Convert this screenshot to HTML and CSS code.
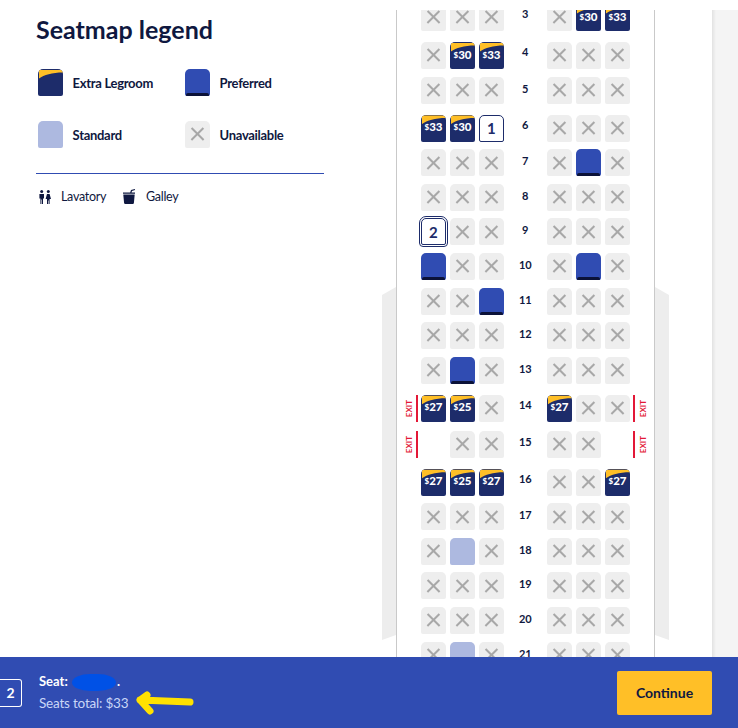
FILE: index.html
```html
<!DOCTYPE html>
<html lang="en">
<head>
  <meta charset="UTF-8" />
  <meta name="viewport" content="width=device-width, initial-scale=1.0" />
  <title>Seat selection</title>
  <link rel="stylesheet" href="styles.css">
</head>
<body>
  <div class="page">
    <aside class="legend">
      <h2>Seatmap legend</h2>
      <div class="legend-grid">
        <div class="legend-item"><span class="seat extra"></span>Extra Legroom</div>
        <div class="legend-item"><span class="seat pref"></span>Preferred</div>
        <div class="legend-item"><span class="seat std"></span>Standard</div>
        <div class="legend-item"><span class="seat x"></span>Unavailable</div>
      </div>
      <div class="amenities">
        <svg class="icon" width="12" height="14" viewBox="0 0 12 14"><circle cx="2.700" cy="1.600" r="1.500"/><path d="M.4 4h4.600v4.600H4V14H3V9.500H2.400V14h-1V8.600H.4z"/><circle cx="9.300" cy="1.600" r="1.500"/><path d="M8 4h2.600L12 9H10.600V14h-1V10.500H9V14H8V9H6.600z"/></svg>
        <span class="amenity-label">Lavatory</span>
        <svg class="icon galley" width="14" height="15" viewBox="0 0 14 15"><path d="M7.200 3.400 8 1l3.800-1 .3 1.100-3.100.8-.5 1.500h3.500v1.400H0V3.400z"/><path d="M.3 5.500h11.400L10.900 14q-.1 1-1.100 1H2.200q-1 0-1.100-1z"/></svg>
        <span class="amenity-label">Galley</span>
      </div>
    </aside>

    <main class="map">
      <div class="wing wing-l"></div>
      <div class="cabin">
        <div class="rows">
          <div class="row tall"><span class="exit"></span><div class="side"><span class="seat x"></span><span class="seat x"></span><span class="seat x"></span></div><span class="num">3</span><div class="side"><span class="seat x"></span><span class="seat extra"><b><small>$</small>30</b></span><span class="seat extra"><b><small>$</small>33</b></span></div></div>
          <div class="row tall"><span class="exit"></span><div class="side"><span class="seat x"></span><span class="seat extra"><b><small>$</small>30</b></span><span class="seat extra"><b><small>$</small>33</b></span></div><span class="num">4</span><div class="side"><span class="seat x"></span><span class="seat x"></span><span class="seat x"></span></div></div>
          <div class="row"><span class="exit"></span><div class="side"><span class="seat x"></span><span class="seat x"></span><span class="seat x"></span></div><span class="num">5</span><div class="side"><span class="seat x"></span><span class="seat x"></span><span class="seat x"></span></div></div>
          <div class="row tall"><span class="exit"></span><div class="side"><span class="seat extra"><b><small>$</small>33</b></span><span class="seat extra"><b><small>$</small>30</b></span><span class="seat picked">1</span></div><span class="num">6</span><div class="side"><span class="seat x"></span><span class="seat x"></span><span class="seat x"></span></div></div>
          <div class="row"><span class="exit"></span><div class="side"><span class="seat x"></span><span class="seat x"></span><span class="seat x"></span></div><span class="num">7</span><div class="side"><span class="seat x"></span><span class="seat pref"></span><span class="seat x"></span></div></div>
          <div class="row"><span class="exit"></span><div class="side"><span class="seat x"></span><span class="seat x"></span><span class="seat x"></span></div><span class="num">8</span><div class="side"><span class="seat x"></span><span class="seat x"></span><span class="seat x"></span></div></div>
          <div class="row"><span class="exit"></span><div class="side"><span class="seat picked active">2</span><span class="seat x"></span><span class="seat x"></span></div><span class="num">9</span><div class="side"><span class="seat x"></span><span class="seat x"></span><span class="seat x"></span></div></div>
          <div class="row"><span class="exit"></span><div class="side"><span class="seat pref"></span><span class="seat x"></span><span class="seat x"></span></div><span class="num">10</span><div class="side"><span class="seat x"></span><span class="seat pref"></span><span class="seat x"></span></div></div>
          <div class="row"><span class="exit"></span><div class="side"><span class="seat x"></span><span class="seat x"></span><span class="seat pref"></span></div><span class="num">11</span><div class="side"><span class="seat x"></span><span class="seat x"></span><span class="seat x"></span></div></div>
          <div class="row"><span class="exit"></span><div class="side"><span class="seat x"></span><span class="seat x"></span><span class="seat x"></span></div><span class="num">12</span><div class="side"><span class="seat x"></span><span class="seat x"></span><span class="seat x"></span></div></div>
          <div class="row"><span class="exit"></span><div class="side"><span class="seat x"></span><span class="seat pref"></span><span class="seat x"></span></div><span class="num">13</span><div class="side"><span class="seat x"></span><span class="seat x"></span><span class="seat x"></span></div></div>
          <div class="row tall"><span class="exit"><em>EXIT</em><i></i></span><div class="side"><span class="seat extra"><b><small>$</small>27</b></span><span class="seat extra"><b><small>$</small>25</b></span><span class="seat x"></span></div><span class="num">14</span><div class="side"><span class="seat extra"><b><small>$</small>27</b></span><span class="seat x"></span><span class="seat x"></span></div><span class="exit right"><i></i><em>EXIT</em></span></div>
          <div class="row mid"><span class="exit"><em>EXIT</em><i></i></span><div class="side"><span class="seat none"></span><span class="seat x"></span><span class="seat x"></span></div><span class="num">15</span><div class="side"><span class="seat x"></span><span class="seat x"></span><span class="seat none"></span></div><span class="exit right"><i></i><em>EXIT</em></span></div>
          <div class="row tall"><span class="exit"></span><div class="side"><span class="seat extra"><b><small>$</small>27</b></span><span class="seat extra"><b><small>$</small>25</b></span><span class="seat extra"><b><small>$</small>27</b></span></div><span class="num">16</span><div class="side"><span class="seat x"></span><span class="seat x"></span><span class="seat extra"><b><small>$</small>27</b></span></div></div>
          <div class="row"><span class="exit"></span><div class="side"><span class="seat x"></span><span class="seat x"></span><span class="seat x"></span></div><span class="num">17</span><div class="side"><span class="seat x"></span><span class="seat x"></span><span class="seat x"></span></div></div>
          <div class="row"><span class="exit"></span><div class="side"><span class="seat x"></span><span class="seat std"></span><span class="seat x"></span></div><span class="num">18</span><div class="side"><span class="seat x"></span><span class="seat x"></span><span class="seat x"></span></div></div>
          <div class="row"><span class="exit"></span><div class="side"><span class="seat x"></span><span class="seat x"></span><span class="seat x"></span></div><span class="num">19</span><div class="side"><span class="seat x"></span><span class="seat x"></span><span class="seat x"></span></div></div>
          <div class="row"><span class="exit"></span><div class="side"><span class="seat x"></span><span class="seat x"></span><span class="seat x"></span></div><span class="num">20</span><div class="side"><span class="seat x"></span><span class="seat x"></span><span class="seat x"></span></div></div>
          <div class="row"><span class="exit"></span><div class="side"><span class="seat x"></span><span class="seat std"></span><span class="seat x"></span></div><span class="num">21</span><div class="side"><span class="seat x"></span><span class="seat x"></span><span class="seat x"></span></div></div>
        </div>
      </div>
      <div class="wing wing-r"></div>
      <div class="rail"></div>
    </main>
  </div>

  <footer class="bar">
    <span class="bar-seat">2</span>
    <div class="bar-info">
      <div class="bar-name">Seat: <span class="scribble"></span>.</div>
      <div class="bar-total">Seats total: $33</div>
    </div>
    <a href="#" class="continue">Continue</a>
    <svg class="arrow" width="70" height="34" viewBox="0 0 70 34"><path d="M60 16 10 14M17 9 10 14 20 25" fill="none" stroke="#ffe100" stroke-width="7" stroke-linecap="round" stroke-linejoin="round"/></svg>
  </footer>
</body>
</html>
```

FILE: styles.css
```css
:root{--navy:#1d2c6a;--ink:#0f1840;--blue:#304cb2;--gold:#ffbf27;--red:#e31837;--off:#eeeeee}
*{box-sizing:border-box;font-family:Lato,"Noto Sans",Arial,sans-serif}
html,body{height:100%}
body{margin:0;overflow:hidden;background:#fff;color:var(--ink)}
.page{display:flex;height:100vh}

.legend{width:382px;flex:none;padding:13px 58px 0 36px}
h2{margin:0 0 24px;font-size:25px;line-height:32px;font-weight:700;color:var(--ink)}
.legend-grid{display:grid;grid-template-columns:147px 1fr;row-gap:25px;padding:0 0 25px 2px;border-bottom:1px solid var(--blue)}
.legend-item{display:flex;align-items:center;gap:10px;font-size:13px;font-weight:700;letter-spacing:-.3px}
.legend-item .seat{flex:none}
.amenities{display:flex;align-items:center;padding:15px 0 0 3px;font-size:12.500px;letter-spacing:-.3px}
.icon{fill:var(--ink);flex:none}
.amenity-label{margin-left:10px;margin-right:17px}
.galley{margin-right:-1px}

.map{flex:1;display:flex;margin-top:10px;overflow:hidden}
.cabin{width:259px;flex:none;height:100%;background:#fff;border-left:1.3px solid #c9c9c9;border-right:1.3px solid #c9c9c9}
.rail{width:26px;flex:none;margin-left:auto;background:linear-gradient(90deg,#e2e2e2,#f4f4f4 4px)}
.wing{width:14px;flex:none;margin-top:277px;height:353px;background:#ededed}
.wing-l{clip-path:polygon(0 8px,100% 0,100% 348px,0 100%)}
.wing-r{clip-path:polygon(0 0,100% 8px,100% 100%,0 348px)}

.rows{display:flex;flex-direction:column;margin-top:-9.4px}
.row{display:flex;flex:none;height:27px;margin-bottom:7.6px}
.row.tall{margin-top:3.4px}
.row.mid{margin-top:1.4px}
.side{display:flex;gap:4.4px}
.num{width:43.4px;text-align:center;font-size:11px;line-height:24px;font-weight:700;color:var(--ink)}
.tall .num{line-height:20px}
.mid .num{line-height:22px}

.seat{display:grid;place-items:center;width:24.6px;height:27px;border-radius:5px 5px 2px 2px;position:relative}
.seat.x{background:var(--off)}
.seat.x::before,.seat.x::after{content:"";position:absolute;width:17px;height:2.300px;background:#a8a8a8;transform:rotate(45deg)}
.seat.x::after{transform:rotate(-45deg)}
.seat.pref{background:var(--blue);overflow:hidden}
.seat.pref::after{content:"";position:absolute;left:1px;right:1px;bottom:0;height:3px;background:#0b1238;border-radius:2px 2px 0 0}
.seat.std{background:#adb9e0}
.seat.extra{background:var(--navy);overflow:hidden}
.seat.extra::before{content:"";position:absolute;left:0;top:0;width:100%;height:10px;background:var(--gold);clip-path:path('M1 9.500C6 6 14 3.500 25 3.500V1H1Z')}
.seat.extra b{position:relative;top:-1px;color:#fff;font-size:11.500px;letter-spacing:-.3px;font-weight:900;line-height:1}
.seat.extra small{font-size:8px;vertical-align:1px;margin-right:.5px}
.seat.picked{background:#fff;border:1.5px solid var(--navy);font-size:15px;font-weight:700;color:var(--navy)}
.seat.active{outline:1px solid var(--navy);outline-offset:1px}
.seat.none{background:none}

.exit{width:24px;display:flex;align-items:center;flex:none;height:27px}
.exit i{width:2px;height:27px;background:var(--red);margin-left:auto;margin-right:3px}
.exit em{writing-mode:vertical-rl;transform:rotate(180deg);font-style:normal;font-weight:700;font-size:8px;color:var(--red);margin-left:7px}
.exit.right{padding-left:3.500px}
.exit.right i{margin:0}
.exit.right em{margin:0 0 0 2.500px}

.bar{position:fixed;left:0;right:0;bottom:0;height:71px;background:var(--blue);display:flex;align-items:center;color:#fff}
.bar-seat{width:22px;height:28px;border:1px solid #fff;border-left:0;border-radius:0 3px 3px 0;display:grid;place-items:center;font-size:14px;font-weight:700}
.bar-info{margin-left:17px}
.bar-name{font-size:13px;font-weight:700;line-height:20px}
.scribble{display:inline-block;width:44px;height:17px;margin:-4px 1px -4px 1px;vertical-align:middle;border-radius:50%/60%;background:#0051e6}
.bar-total{font-size:13.500px;line-height:24px;letter-spacing:-.2px;color:#c9d6f7}
.continue{margin-left:auto;margin-right:26px;width:95px;height:44px;border-radius:2px;background:var(--gold);color:var(--ink);display:grid;place-items:center;font-size:14px;font-weight:700;text-decoration:none}
.arrow{position:absolute;left:130px;top:29px}
```
